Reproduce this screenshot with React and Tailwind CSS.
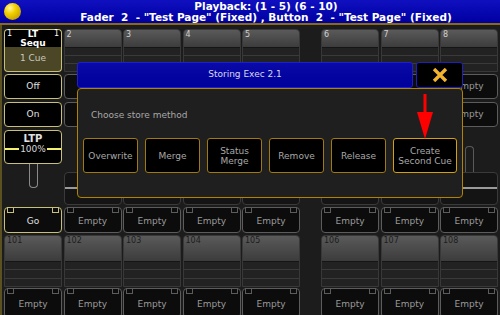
import React from 'react';

const font = "font-['DejaVu_Sans',sans-serif]";

const CornerBox = ({ label, border = 'border-[#5c5c5c]', text = 'text-[#9a9a9a]', h = 'h-[26px]' }) => (
  <div className={`relative ${h} rounded-[4px] border ${border} bg-[#0c0c0c] flex items-center justify-center`}>
    <div className={`absolute left-[2px] top-[-1px] w-[7px] h-[6px] border ${border}`} />
    <div className={`absolute right-[2px] top-[-1px] w-[7px] h-[6px] border ${border}`} />
    <span className={`text-[9px] ${text} pt-[3px]`}>{label}</span>
  </div>
);

const PlainBox = ({ label }) => (
  <div className="h-[25px] rounded-[4px] border border-[#5c5c5c] bg-[#0c0c0c] flex items-center justify-center">
    <span className="text-[9px] text-[#9a9a9a]">{label}</span>
  </div>
);

const ExecHead = ({ num, h, grad, light }) => (
  <div className={`${h} rounded-t-[4px] border border-[#383838] overflow-hidden flex flex-col bg-[#222]`}>
    <div className={`${grad} bg-gradient-to-b from-[#5a5a5a] to-[#3c3c3c] text-[8px] leading-[10px] pl-[2px] ${light ? 'text-[#d0d0d0]' : 'text-[#1c1c1c]'}`}>{num}</div>
    <div className="flex-1 border-t border-[#151515]" />
    <div className="flex-1 border-t border-[#3a3a3a]" />
    <div className="flex-1 border-t border-[#3a3a3a]" />
  </div>
);

// executor columns 2..8; the ones under the dialog keep their buttons but no labels
const FaderCol = ({ num, bottomNum, hidden }) => (
  <div className="flex flex-col">
    <ExecHead num={num} h="h-[43px]" grad="h-[17px]" light />
    <div className="mt-[2px]"><PlainBox label={hidden ? '' : 'Empty'} /></div>
    <div className="mt-[3px]"><PlainBox label={hidden ? '' : 'Empty'} /></div>
    <div className="h-[78px] flex flex-col items-center">
      <div className="mt-[19px] w-[9px] h-[26px] rounded-t-[4px] border border-b-0 border-[#5a5a5a]" />
      <div className="w-full h-[33px] rounded-[4px] border border-[#3a3a3a] bg-[#141414] flex flex-col">
        <div className="mt-[14px] h-[2px] bg-[#9a9a9a]" />
      </div>
    </div>
    <div className="mt-[2px]"><CornerBox label="Empty" /></div>
    <div className="mt-[2px]"><ExecHead num={bottomNum} h="h-[52px]" grad="h-[25px]" /></div>
    <div className="mt-[1px]"><CornerBox label="Empty" h="h-[30px]" /></div>
  </div>
);

const MainCol = () => (
  <div className="flex flex-col">
    <div className="h-[18px] rounded-t-[4px] border border-b-0 border-[#c8c07a] bg-black relative flex flex-col items-center text-white font-bold text-[9px] leading-[8.5px]">
      <span className="absolute left-[2px] top-[0px] font-normal text-[8px]">1</span>
      <span className="absolute right-[2px] top-[0px] font-normal text-[8px]">1</span>
      <span>LT</span>
      <span>Sequ</span>
    </div>
    <div className="h-[25px] rounded-b-[4px] border border-t-0 border-[#c8c07a] bg-[#4a4626] flex items-center justify-center">
      <span className="text-[9px] text-[#c8c8c0]">1 Cue</span>
    </div>
    <div className="mt-[2px] h-[25px] rounded-[4px] border border-[#c8c07a] bg-black flex items-center justify-center">
      <span className="text-[9px] text-[#e0e0e0]">Off</span>
    </div>
    <div className="mt-[3px] h-[25px] rounded-[4px] border border-[#c8c07a] bg-black flex items-center justify-center">
      <span className="text-[9px] text-[#e0e0e0]">On</span>
    </div>
    <div className="mt-[3px] h-[34px] rounded-[4px] border border-[#c8c07a] bg-black flex flex-col items-center pt-[2px]">
      <span className="text-[10px] leading-[11px] font-bold text-[#e0e0e0]">LTP</span>
      <div className="w-full flex items-center gap-[1px]">
        <div className="flex-1 h-[2px] bg-[#f4f070]" />
        <span className="text-[9px] leading-[10px] text-[#d8d8d8]">100%</span>
        <div className="flex-1 h-[2px] bg-[#f4f070]" />
      </div>
    </div>
    <div className="h-[41px] flex justify-center">
      <div className="w-[9px] h-[24px] rounded-b-[4px] border border-t-0 border-[#8a8a8a]" />
    </div>
    <div className="mt-[2px]"><CornerBox label="Go" border="border-[#c8c07a]" text="text-[#e0e0e0]" /></div>
    <div className="mt-[2px]"><ExecHead num="101" h="h-[52px]" grad="h-[25px]" /></div>
    <div className="mt-[1px]"><CornerBox label="Empty" h="h-[30px]" /></div>
  </div>
);

const methods = ['Overwrite', 'Merge', 'Status\nMerge', 'Remove', 'Release'];

const Dialog = () => (
  <div className="absolute left-[77px] top-[62px] w-[386px] flex flex-col">
    <div className="flex gap-[3px] h-[26px]">
      <div className="flex-1 rounded-[3px] border border-[#2020c8] bg-gradient-to-b from-[#0a0aa8] to-[#00009a] flex items-center justify-center">
        <span className="text-[9px] text-[#d8d8f0]">Storing Exec 2.1</span>
      </div>
      <div className="w-[47px] rounded-[3px] border border-[#2020b8] bg-black flex items-center justify-center">
        <svg width="16" height="14" viewBox="0 0 16 14">
          <path d="M2 1 L14 13 M14 1 L2 13" stroke="#f2b430" strokeWidth="3.4" strokeLinecap="butt" />
        </svg>
      </div>
    </div>
    <div className="h-[110px] rounded-[4px] border border-[#b08400] bg-[#1f1f1f] px-[5px] pt-[20px] relative">
      <div className="pl-[8px] text-[9px] text-[#a8a8a8] leading-[12px]">Choose store method</div>
      <div className="mt-[17px] flex gap-[7px]">
        {methods.map((m) => (
          <div key={m} className="w-[55px] h-[35px] rounded-[3px] border border-[#a07a10] bg-black flex items-center justify-center text-center whitespace-pre-line text-[9px] leading-[10px] text-[#a8a8a8]">
            {m}
          </div>
        ))}
        <div className="w-[64px] h-[35px] rounded-[3px] border-[1.5px] border-[#d4a010] bg-black flex items-center justify-center text-center text-[9px] leading-[10px] text-[#a8a8a8]">
          Create<br />Second Cue
        </div>
      </div>
      <svg className="absolute left-[338px] top-[5px]" width="18" height="46" viewBox="0 0 18 46">
        <rect x="7.5" y="0" width="3" height="20" fill="#ff0000" />
        <path d="M1 18 L17 18 L9 45 Z" fill="#ff0000" />
      </svg>
    </div>
  </div>
);

export default function App() {
  return (
    <div className={`relative w-[500px] h-[315px] overflow-hidden bg-[#1c1c1c] ${font}`}>
      <div className="h-[23px] bg-gradient-to-b from-[#1010c0] to-[#0000a0] flex items-center">
        <div className="ml-[4px] w-[17px] h-[17px] rounded-full bg-[radial-gradient(circle_at_35%_30%,#fff6a0_0%,#f2d000_35%,#b08a00_100%)]" />
        <div className="flex-1 pl-[11px] flex flex-col items-center text-white font-bold text-[10.5px] leading-[10.5px]">
          <span>Playback: (1 - 5) (6 - 10)</span>
          <span className="whitespace-pre">Fader  2  - "Test Page" (Fixed) , Button  2  - "Test Page" (Fixed)</span>
        </div>
      </div>
      <div className="h-[2px] bg-[#8a6a12]" />
      <div className="border-l-2 border-[#5a5020] pl-[2px] pt-[4px] grid grid-cols-[repeat(5,58px)_18px_repeat(3,58px)] gap-x-[1.5px]">
        <MainCol />
        <FaderCol num="2" bottomNum="102" hidden />
        <FaderCol num="3" bottomNum="103" hidden />
        <FaderCol num="4" bottomNum="104" hidden />
        <FaderCol num="5" bottomNum="105" hidden />
        <div />
        <FaderCol num="6" bottomNum="106" hidden />
        <FaderCol num="7" bottomNum="107" hidden />
        <FaderCol num="8" bottomNum="108" />
      </div>
      <Dialog />
    </div>
  );
}
